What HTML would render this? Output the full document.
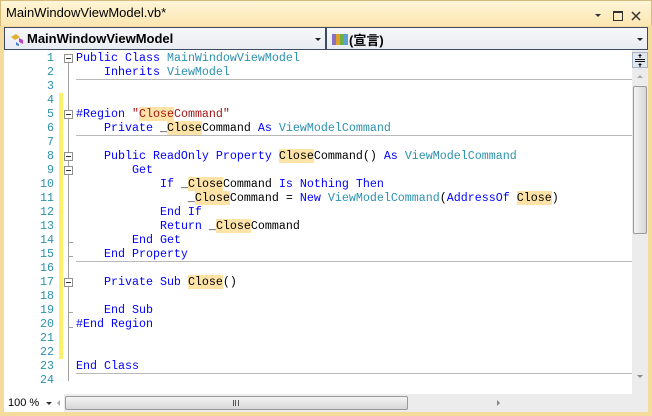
<!DOCTYPE html>
<html><head><meta charset="utf-8"><style>
*{margin:0;padding:0;box-sizing:border-box}
body{width:652px;height:416px;overflow:hidden;background:#f6dc9c;font-family:"Liberation Sans","Noto Sans CJK JP",sans-serif;position:relative}
#title{position:absolute;left:0;top:0;width:652px;height:26px;background:linear-gradient(#fff5d8,#fbe6b0);border:1px solid #d7bb7a;border-bottom:none}
#title .t{position:absolute;left:5px;top:4px;font-size:13px;color:#000}
.dd{position:absolute;top:27px;height:23px;background:linear-gradient(#f6f7fa,#e9ecf2);border:1px solid #3c4a62;font-size:13px;font-weight:bold;color:#000}
.dd .tx{position:absolute;left:22px;top:3px}
.dd .ar{position:absolute;right:4px;top:10px;width:0;height:0;border-left:3px solid transparent;border-right:3px solid transparent;border-top:3px solid #222}
#ed{position:absolute;left:4px;top:50px;width:628px;height:344px;background:#fff}
.code{position:absolute;left:0;top:51px;font-family:"Liberation Mono",monospace;font-size:11.67px;line-height:14px;white-space:pre}
.ln{position:absolute;left:20px;width:34px;text-align:right;color:#2b91af}
.c{position:absolute;left:76px;color:#000}
.k{color:#0000ff}.ty{color:#2b91af}.s{color:#a31515}.h{background:#fde3a7}
.sep{position:absolute;left:76px;width:556px;height:1px;background:#b8b8b8}
.vl{position:absolute;left:68px;width:1px;background:#a0a0a0}
.fb{position:absolute;left:64px;width:9px;height:9px;border:1px solid #909090;background:#fff}
.fb:after{content:"";position:absolute;left:1px;top:3px;width:5px;height:1px;background:#333}
.tick{position:absolute;left:68px;width:5px;height:1px;background:#a0a0a0}
#chg{position:absolute;left:59px;top:93px;width:4px;height:266px;background:#fff06a}
#vs{position:absolute;left:632px;top:50px;width:16px;height:344px;background:#ececec}
#hs{position:absolute;left:4px;top:394px;width:644px;height:18px;background:#ececec}
</style></head><body>
<div id="title"><span class="t">MainWindowViewModel.vb*</span>
<svg style="position:absolute;left:594px;top:9px" width="52" height="12"><path d="M0 4h6l-3 3z" fill="#333"/><rect x="18.5" y="1.5" width="9" height="9" fill="none" stroke="#333"/><rect x="18" y="1" width="10" height="2" fill="#333"/><path d="M37 2l8 8M45 2l-8 8" stroke="#333" stroke-width="1.5"/></svg></div>
<div class="dd" style="left:4px;width:322px"><svg style="position:absolute;left:5px;top:4px" width="16" height="14"><path d="M1 5l5-3 4 3-5 3z" fill="#e0b030"/><path d="M9 6l4 2v4l-4-2z" fill="#c040c0"/><path d="M6 10l3 2v2l-3-1z" fill="#4080d0"/></svg><span class="tx">MainWindowViewModel</span><span class="ar"></span></div>
<div class="dd" style="left:326px;width:322px"><svg style="position:absolute;left:4px;top:4px" width="18" height="14"><rect x="1" y="2" width="4" height="11" fill="#8a70c0"/><rect x="5" y="2" width="4" height="11" fill="#e0a030"/><rect x="9" y="2" width="4" height="11" fill="#70b040"/><rect x="13" y="2" width="4" height="11" fill="#60a0d0"/></svg><span class="tx" style="left:22px;top:2px">(宣言)</span><span class="ar"></span></div>
<div id="ed"></div>
<div id="chg"></div>
<div class="vl" style="top:63px;height:318px"></div>
<div class="fb" style="top:54px"></div>
<div class="fb" style="top:110px"></div>
<div class="fb" style="top:152px"></div>
<div class="fb" style="top:166px"></div>
<div class="fb" style="top:278px"></div>
<div class="tick" style="top:242px"></div>
<div class="tick" style="top:256px"></div>
<div class="tick" style="top:312px"></div>
<div class="tick" style="top:327px"></div>
<div class="sep" style="top:79px"></div>
<div class="sep" style="top:135px"></div>
<div class="sep" style="top:261px"></div>
<div class="sep" style="top:373px"></div>
<div class="code"><div class="ln">1
2
3
4
5
6
7
8
9
10
11
12
13
14
15
16
17
18
19
20
21
22
23
24</div><div class="c"><span class="k">Public Class</span> <span class="ty">MainWindowViewModel</span>
    <span class="k">Inherits</span> <span class="ty">ViewModel</span>


<span class="k">#Region</span> <span class="s">"<span class="h">Close</span>Command"</span>
    <span class="k">Private</span> _<span class="h">Close</span>Command <span class="k">As</span> <span class="ty">ViewModelCommand</span>

    <span class="k">Public ReadOnly Property</span> <span class="h">Close</span>Command() <span class="k">As</span> <span class="ty">ViewModelCommand</span>
        <span class="k">Get</span>
            <span class="k">If</span> _<span class="h">Close</span>Command <span class="k">Is Nothing Then</span>
                _<span class="h">Close</span>Command = <span class="k">New</span> <span class="ty">ViewModelCommand</span>(<span class="k">AddressOf</span> <span class="h">Close</span>)
            <span class="k">End If</span>
            <span class="k">Return</span> _<span class="h">Close</span>Command
        <span class="k">End Get</span>
    <span class="k">End Property</span>

    <span class="k">Private Sub</span> <span class="h">Close</span>()

    <span class="k">End Sub</span>
<span class="k">#End Region</span>


<span class="k">End Class</span></div></div>
<div id="vs">
<div style="position:absolute;left:0;top:2px;width:16px;height:16px;background:#dfe6f0;border:1px solid #a8b4c8"><svg width="14" height="14"><path d="M2 6.5h10M2 8.5h10M7 1v4M7 14v-4" stroke="#111"/><path d="M5 3l2-2 2 2zM5 11l2 2 2-2z" fill="#111"/></svg></div>
<div style="position:absolute;left:5px;top:25px;border-left:3px solid transparent;border-right:3px solid transparent;border-bottom:3px solid #aaa"></div>
<div style="position:absolute;left:1px;top:36px;width:14px;height:148px;background:linear-gradient(90deg,#f4f4f4,#d6d6d6);border:1px solid #999;border-radius:2px"></div>
<div style="position:absolute;left:5px;top:325px;border-left:3px solid transparent;border-right:3px solid transparent;border-top:3px solid #888"></div>
</div>
<div id="hs">
<div style="position:absolute;left:0;top:0;width:60px;height:18px;background:#fff;font-size:11px;padding:3px 0 0 4px">100 %</div>
<div style="position:absolute;left:42px;top:8px;border-left:3px solid transparent;border-right:3px solid transparent;border-top:3px solid #333"></div>
<div style="position:absolute;left:53px;top:6px;border-top:3px solid transparent;border-bottom:3px solid transparent;border-right:3px solid #aaa"></div>
<div style="position:absolute;left:61px;top:2px;width:343px;height:14px;background:linear-gradient(#f4f4f4,#d6d6d6);border:1px solid #999;border-radius:2px"></div>
<div style="position:absolute;left:229px;top:6px;width:6px;height:6px;border-left:1px solid #555;border-right:1px solid #555"></div>
<div style="position:absolute;left:231px;top:6px;width:2px;height:6px;border-left:1px solid #555"></div>
<div style="position:absolute;left:493px;top:6px;border-top:3px solid transparent;border-bottom:3px solid transparent;border-left:3px solid #888"></div>
</div>
</body></html>
